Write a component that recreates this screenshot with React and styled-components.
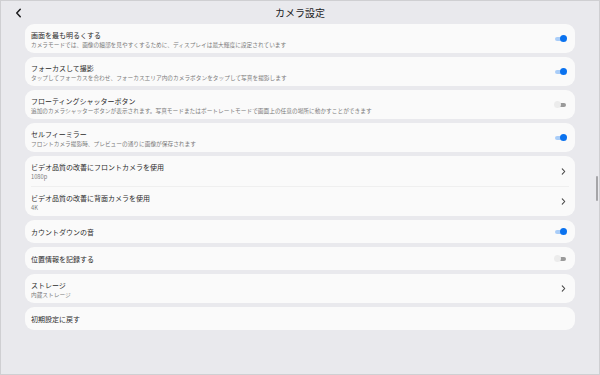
import React from 'react'
import styled, { createGlobalStyle } from 'styled-components'

const GlobalStyle = createGlobalStyle`
    html, body {
        margin: 0;
        padding: 0;
        background: #e9e9ed;
    }
    body {
        font-family: "Noto Sans CJK JP", "Noto Sans", sans-serif;
    }
`

const settings = [
    [{ title: '画面を最も明るくする', sub: 'カメラモードでは、画像の細部を見やすくするために、ディスプレイは最大輝度に設定されています', kind: 'on' }],
    [{ title: 'フォーカスして撮影', sub: 'タップしてフォーカスを合わせ、フォーカスエリア内のカメラボタンをタップして写真を撮影します', kind: 'on' }],
    [{ title: 'フローティングシャッターボタン', sub: '追加のカメラシャッターボタンが表示されます。写真モードまたはポートレートモードで画面上の任意の場所に動かすことができます', kind: 'off' }],
    [{ title: 'セルフィーミラー', sub: 'フロントカメラ撮影時、プレビューの通りに画像が保存されます', kind: 'on' }],
    [
        { title: 'ビデオ品質の改善にフロントカメラを使用', sub: '1080p', kind: 'link' },
        { title: 'ビデオ品質の改善に背面カメラを使用', sub: '4K', kind: 'link' },
    ],
    [{ title: 'カウントダウンの音', kind: 'on' }],
    [{ title: '位置情報を記録する', kind: 'off' }],
    [{ title: 'ストレージ', sub: '内蔵ストレージ', kind: 'link' }],
    [{ title: '初期設定に戻す' }],
]

function Chevron({ left }) {
    return (
        <svg width="6" height="8" viewBox="0 0 6 8">
            <path d={left ? 'M4.5 0.8 L1.5 4 L4.5 7.2' : 'M1.5 0.8 L4.5 4 L1.5 7.2'}
                fill="none" stroke="currentColor" strokeWidth="1.3" strokeLinecap="round" strokeLinejoin="round" />
        </svg>
    )
}

function Control({ kind }) {
    if (kind === 'link') return <Arrow><Chevron /></Arrow>
    if (kind === 'on' || kind === 'off') return <Toggle on={kind === 'on'}><Knob on={kind === 'on'} /></Toggle>
    return null
}

export default function App() {
    return (
        <Frame>
            <GlobalStyle />
            <Header>
                <Back><Chevron left /></Back>
                <Title>カメラ設定</Title>
                <span />
            </Header>
            <List>
                {settings.map((group, gi) => (
                    <Card key={gi}>
                        {group.map((item, i) => (
                            <Row key={i} divided={i > 0} size={group.length > 1 ? 30 : item.sub ? 29 : 23}>
                                <Texts>
                                    <RowTitle>{item.title}</RowTitle>
                                    {item.sub && <RowSub>{item.sub}</RowSub>}
                                </Texts>
                                <Control kind={item.kind} />
                            </Row>
                        ))}
                    </Card>
                ))}
            </List>
            <ScrollThumb />
        </Frame>
    )
}

const Frame = styled.div`
    position: relative;
    width: 600px;
    height: 375px;
    box-sizing: border-box;
    border: 1px solid #cfcfd2;
    background: #e9e9ed;
    overflow: hidden;
`
const Header = styled.div`
    display: grid;
    grid-template-columns: 1fr auto 1fr;
    align-items: center;
    height: 23px;
    padding: 0 14px;
`
const Back = styled.div`
    display: flex;
    align-items: center;
    color: #1c1c1e;
    svg { width: 7px; height: 10px; }
`
const Title = styled.div`
    font-size: 10px;
    color: #1c1c1e;
    line-height: 14px;
`
const List = styled.div`
    display: flex;
    flex-direction: column;
    gap: 4px;
    padding: 0 24px;
`
const Card = styled.div`
    background: #fafafa;
    border-radius: 9px;
    padding: 0 6px;
`
const Row = styled.div`
    display: flex;
    align-items: center;
    justify-content: space-between;
    height: ${p => p.size}px;
    border-top: ${p => (p.divided ? '1px solid #efefef' : 'none')};
    box-sizing: border-box;
`
const Texts = styled.div`
    display: flex;
    flex-direction: column;
    gap: 1px;
`
const RowTitle = styled.div`
    font-size: 7px;
    line-height: 10px;
    color: #2b2b2b;
`
const RowSub = styled.div`
    font-size: 5.7px;
    line-height: 7px;
    color: #7a7a7a;
`
const Arrow = styled.div`
    display: flex;
    color: #444;
    margin-right: 3px;
    svg { width: 5px; height: 7px; }
`
const Toggle = styled.div`
    position: relative;
    width: 11px;
    height: 4px;
    border-radius: 2px;
    margin-right: 3px;
    background: ${p => (p.on ? '#a9cdf8' : '#9a9a9a')};
`
const Knob = styled.div`
    position: absolute;
    top: -1.5px;
    ${p => (p.on ? 'right: -1px;' : 'left: -1px;')}
    width: 7px;
    height: 7px;
    border-radius: 50%;
    background: ${p => (p.on ? '#0a72ef' : '#ececec')};
`
const ScrollThumb = styled.div`
    position: absolute;
    right: 1px;
    top: 175px;
    width: 2px;
    height: 25px;
    border-radius: 1px;
    background: #a5a5a8;
`
